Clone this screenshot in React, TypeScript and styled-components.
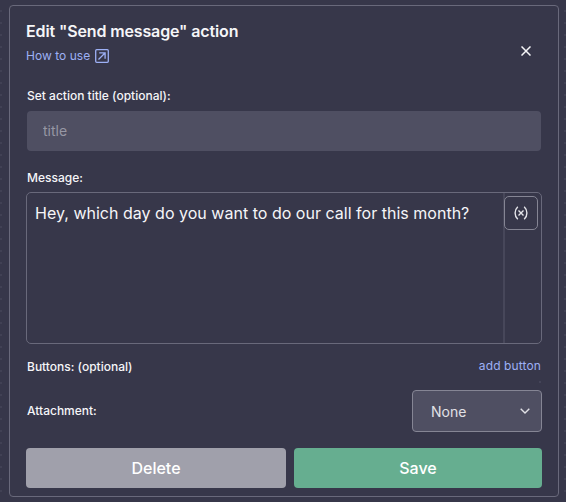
import React from "react";
import styled, { createGlobalStyle } from "styled-components";

const GlobalStyle = createGlobalStyle`
  *, *::before, *::after { box-sizing: border-box; }
  body {
    margin: 0;
    background: #37374a;
    color: #f5f5f8;
    font-family: Inter, "Liberation Sans", sans-serif;
  }
  button, input, textarea { font-family: inherit; margin: 0; }
`;

const Canvas = styled.main`
  height: 502px;
  padding: 5px 7px 5px 9px;
  overflow: hidden;
  background-color: #37374a;
  background-image: conic-gradient(from 270deg at 2px 2px, #414154 90deg, transparent 0);
  background-size: 12px 12px;
  background-position: 0 10px;
`;

const Panel = styled.section`
  display: flex;
  flex-direction: column;
  height: 492px;
  padding: 0 16px 8px;
  border: 1px solid #69697b;
  border-radius: 4px;
  background: #37374a;
`;

const Header = styled.header`
  display: flex;
  justify-content: space-between;
  height: 76px;
  padding-top: 15px;
`;

const Title = styled.h1`
  margin: 0;
  font-size: 16px;
  font-weight: 600;
  line-height: 20px;
  letter-spacing: -0.13px;
  white-space: nowrap;
`;

const HelpLink = styled.a`
  display: flex;
  align-items: center;
  gap: 5px;
  height: 18px;
  margin-top: 6px;
  color: #9db0f5;
  font-size: 12px;
  letter-spacing: 0.03px;
  line-height: 18px;
  white-space: nowrap;
`;

const CloseButton = styled.button`
  display: flex;
  align-items: center;
  justify-content: center;
  width: 32px;
  height: 32px;
  margin-top: 14px;
  padding: 0;
  border: 0;
  background: none;
  color: #f5f5f8;
`;

const Label = styled.label`
  padding-left: 1px;
  font-size: 12px;
  font-weight: 500;
  line-height: 16px;
  white-space: nowrap;
`;

const FieldHeading = styled.div`
  display: flex;
  align-items: flex-end;
  height: 22px;
`;

const TitleInput = styled.input`
  height: 40px;
  margin: 7px 1px 19px;
  padding: 0 16px 1px;
  border: 0;
  border-radius: 4px;
  background: #4f4f62;
  color: #f5f5f8;
  font-size: 14px;
  outline: 0;
  &::placeholder { color: #9797a4; opacity: 1; }
`;

const Editor = styled.div`
  display: flex;
  height: 152px;
  margin-top: 6px;
  border: 1px solid #69697b;
  border-radius: 5px;
`;

const MessageText = styled.textarea`
  flex: 1;
  min-width: 0;
  padding: 8px 0 0 8px;
  border: 0;
  background: none;
  color: #f5f5f8;
  font-size: 16px;
  letter-spacing: 0.015px;
  line-height: 24px;
  outline: 0;
  resize: none;
`;

const EditorTools = styled.div`
  width: 38px;
  padding-top: 3px;
  border-left: 2px solid #47475a;
`;

const VariableButton = styled.button`
  display: flex;
  align-items: center;
  justify-content: center;
  width: 34px;
  height: 34px;
  margin-left: -1px;
  padding: 0;
  border: 1px solid #858594;
  border-radius: 5px;
  background: #37374a;
  color: #e6e6eb;
`;

const Row = styled.div<{ $height: number }>`
  display: flex;
  align-items: center;
  justify-content: space-between;
  height: ${({ $height }) => $height}px;
`;

const AddButton = styled.button`
  position: relative;
  padding: 0 1px 2px 0;
  border: 0;
  background: none;
  color: #9db0f5;
  font-size: 12px;
  letter-spacing: 0.12px;
  line-height: 18px;

  &::after {
    content: "";
    position: absolute;
    right: 1px;
    bottom: -6px;
    width: 2px;
    height: 2px;
    background: #444458;
  }
`;

const SelectButton = styled.button`
  display: flex;
  align-items: center;
  justify-content: space-between;
  width: 130px;
  height: 42px;
  padding: 0 11px 0 18px;
  border: 1px solid #858594;
  border-radius: 4px;
  background: #4f4f62;
  color: #e1e1e6;
  font-size: 14px;
`;

const Footer = styled.footer`
  display: grid;
  grid-template-columns: 260px 248px;
  gap: 8px;
  margin-top: 16px;
`;

const ActionButton = styled.button<{ $color: string }>`
  height: 40px;
  padding: 0;
  border: 0;
  border-radius: 4px;
  background: ${({ $color }) => $color};
  color: #ffffff;
  font-size: 16px;
  font-weight: 500;
`;

const ExternalIcon = () => (
  <svg width="14" height="14" viewBox="0 0 14 14" fill="none" stroke="currentColor" strokeWidth="1.3">
    <rect x=".7" y=".7" width="12.6" height="12.6" rx="1" />
    <path d="M3.5 10.5 10 4M4.2 3.9h5.9v5.9" />
  </svg>
);

const CloseIcon = () => (
  <svg width="10" height="10" viewBox="0 0 10 10" fill="none" stroke="currentColor" strokeWidth="1.5">
    <path d="m.5.5 9 9M9.5.5l-9 9" />
  </svg>
);

const VariableIcon = () => (
  <svg width="14" height="14" viewBox="0 0 14 14" fill="none" stroke="currentColor" strokeWidth="1.4">
    <path d="M3.8.7C.2 4 .2 10 3.8 13.3M10.2.7c3.6 3.3 3.6 9.3 0 12.6M4.5 4.5l5 5M9.5 4.5l-5 5" />
  </svg>
);

const ChevronIcon = () => (
  <svg width="10" height="6" viewBox="0 0 10 6" fill="none" stroke="currentColor" strokeWidth="1.4">
    <path d="m.7.7 4.3 4.3L9.3.7" />
  </svg>
);

export default function App() {
  return (
    <>
      <GlobalStyle />
      <Canvas>
        <Panel>
          <Header>
            <div>
              <Title>Edit "Send message" action</Title>
              <HelpLink>How to use <ExternalIcon /></HelpLink>
            </div>
            <CloseButton aria-label="Close"><CloseIcon /></CloseButton>
          </Header>
          <FieldHeading>
            <Label htmlFor="action-title">Set action title (optional):</Label>
          </FieldHeading>
          <TitleInput id="action-title" placeholder="title" />
          <Label htmlFor="message">Message:</Label>
          <Editor>
            <MessageText id="message" spellCheck={false} defaultValue="Hey, which day do you want to do our call for this month?" />
            <EditorTools>
              <VariableButton aria-label="Insert variable"><VariableIcon /></VariableButton>
            </EditorTools>
          </Editor>
          <Row $height={46}>
            <Label as="span">Buttons: (optional)</Label>
            <AddButton>add button</AddButton>
          </Row>
          <Row $height={42}>
            <Label as="span">Attachment:</Label>
            <SelectButton>None <ChevronIcon /></SelectButton>
          </Row>
          <Footer>
            <ActionButton $color="#a0a0ab">Delete</ActionButton>
            <ActionButton $color="#66ae90">Save</ActionButton>
          </Footer>
        </Panel>
      </Canvas>
    </>
  );
}
